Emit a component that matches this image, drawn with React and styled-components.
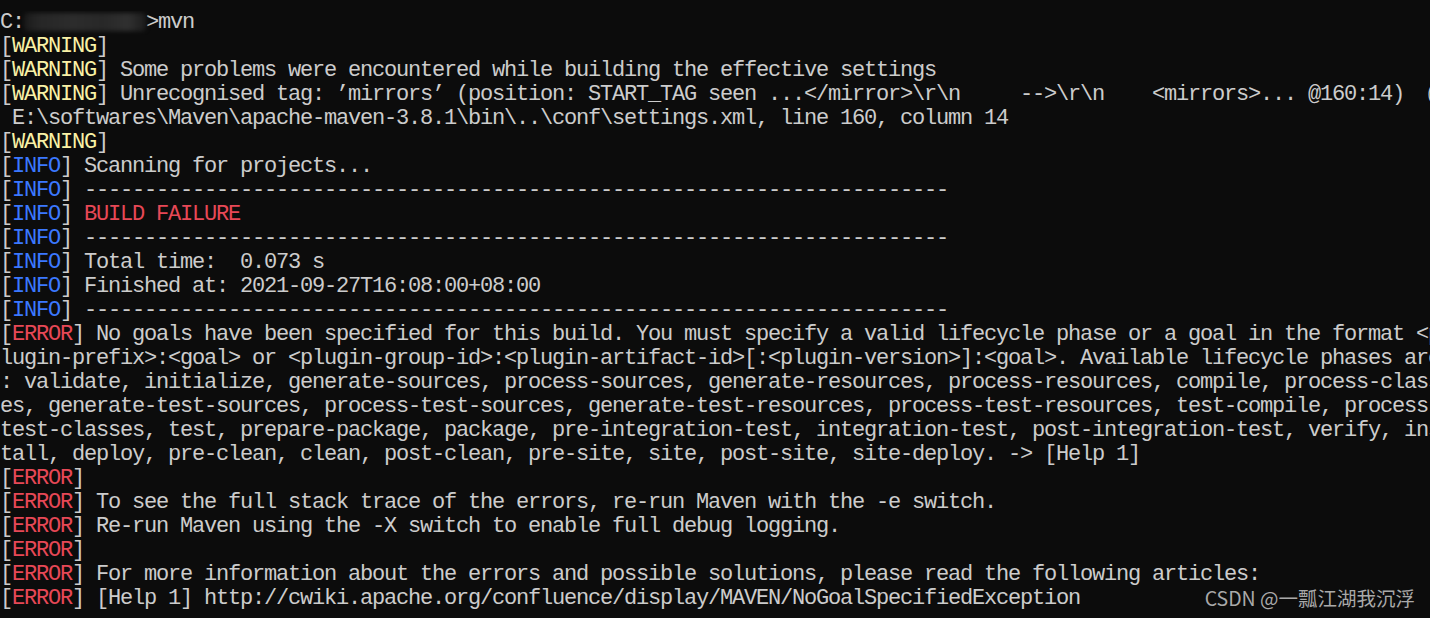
import React from "react";
import styled, { createGlobalStyle } from "styled-components";

const Global = createGlobalStyle`
  html, body { margin: 0; padding: 0; background: #0c0c0c; }
  body { overflow: hidden; }
`;

const Screen = styled.div`
  position: relative;
  width: 1430px;
  height: 618px;
  background: #0c0c0c;
  overflow: hidden;
`;

const Console = styled.div`
  display: flex;
  flex-direction: column;
  padding-top: 11px;
  font-family: "Liberation Mono", "Courier New", monospace;
  font-size: 22px;
  letter-spacing: -1.2022px;
  color: #cccccc;
`;

const Line = styled.div`
  height: 24px;
  line-height: 24px;
  white-space: pre;
  overflow: hidden;
`;

const levelColor = {
  WARNING: "#f9f1a5",
  INFO: "#3b78ff",
  ERROR: "#e74856",
};

const Word = styled.span`
  color: ${(p) => levelColor[p.$level]};
`;

const Failure = styled.span`
  color: #e74856;
`;

const Redacted = styled.span`
  display: inline-block;
  width: 122px;
  height: 18px;
  vertical-align: -3px;
  border-radius: 4px;
  background: linear-gradient(
    to right,
    #1a1a1a 0%,
    #262626 12%,
    #2c2c2c 40%,
    #282828 65%,
    #303030 85%,
    #1c1c1c 100%
  );
  filter: blur(2px);
`;

const Watermark = styled.div`
  position: absolute;
  right: 15px;
  bottom: 6px;
  font-family: "Noto Sans CJK SC", "Noto Sans", sans-serif;
  font-size: 19.5px;
  color: #a9a9a9;
  letter-spacing: 0;
`;

const Tag = ({ level }) => (
  <>
    [<Word $level={level}>{level}</Word>]
  </>
);

const DASHES = "-".repeat(72);

const rows = [
  { level: "WARNING", text: "" },
  { level: "WARNING", text: " Some problems were encountered while building the effective settings" },
  {
    level: "WARNING",
    text:
      " Unrecognised tag: \u2019mirrors\u2019 (position: START_TAG seen ...</mirror>\\r\\n     -->\\r\\n    <mirrors>... @160:14)  @",
  },
  { text: " E:\\softwares\\Maven\\apache-maven-3.8.1\\bin\\..\\conf\\settings.xml, line 160, column 14" },
  { level: "WARNING", text: "" },
  { level: "INFO", text: " Scanning for projects..." },
  { level: "INFO", text: " " + DASHES },
  { level: "INFO", failure: true },
  { level: "INFO", text: " " + DASHES },
  { level: "INFO", text: " Total time:  0.073 s" },
  { level: "INFO", text: " Finished at: 2021-09-27T16:08:00+08:00" },
  { level: "INFO", text: " " + DASHES },
  {
    level: "ERROR",
    text: " No goals have been specified for this build. You must specify a valid lifecycle phase or a goal in the format <p",
  },
  { text: "lugin-prefix>:<goal> or <plugin-group-id>:<plugin-artifact-id>[:<plugin-version>]:<goal>. Available lifecycle phases are" },
  { text: ": validate, initialize, generate-sources, process-sources, generate-resources, process-resources, compile, process-class" },
  { text: "es, generate-test-sources, process-test-sources, generate-test-resources, process-test-resources, test-compile, process-" },
  { text: "test-classes, test, prepare-package, package, pre-integration-test, integration-test, post-integration-test, verify, ins" },
  { text: "tall, deploy, pre-clean, clean, post-clean, pre-site, site, post-site, site-deploy. -> [Help 1]" },
  { level: "ERROR", text: "" },
  { level: "ERROR", text: " To see the full stack trace of the errors, re-run Maven with the -e switch." },
  { level: "ERROR", text: " Re-run Maven using the -X switch to enable full debug logging." },
  { level: "ERROR", text: "" },
  { level: "ERROR", text: " For more information about the errors and possible solutions, please read the following articles:" },
  { level: "ERROR", text: " [Help 1] http://cwiki.apache.org/confluence/display/MAVEN/NoGoalSpecifiedException" },
];

export default function App() {
  return (
    <Screen>
      <Global />
      <Console>
        <Line>
          C:<Redacted />&gt;mvn
        </Line>
        {rows.map((r, i) => (
          <Line key={i}>
            {r.level && <Tag level={r.level} />}
            {r.failure ? (
              <>
                {" "}
                <Failure>BUILD FAILURE</Failure>
              </>
            ) : (
              r.text
            )}
          </Line>
        ))}
      </Console>
      <Watermark>CSDN @一瓢江湖我沉浮</Watermark>
    </Screen>
  );
}
